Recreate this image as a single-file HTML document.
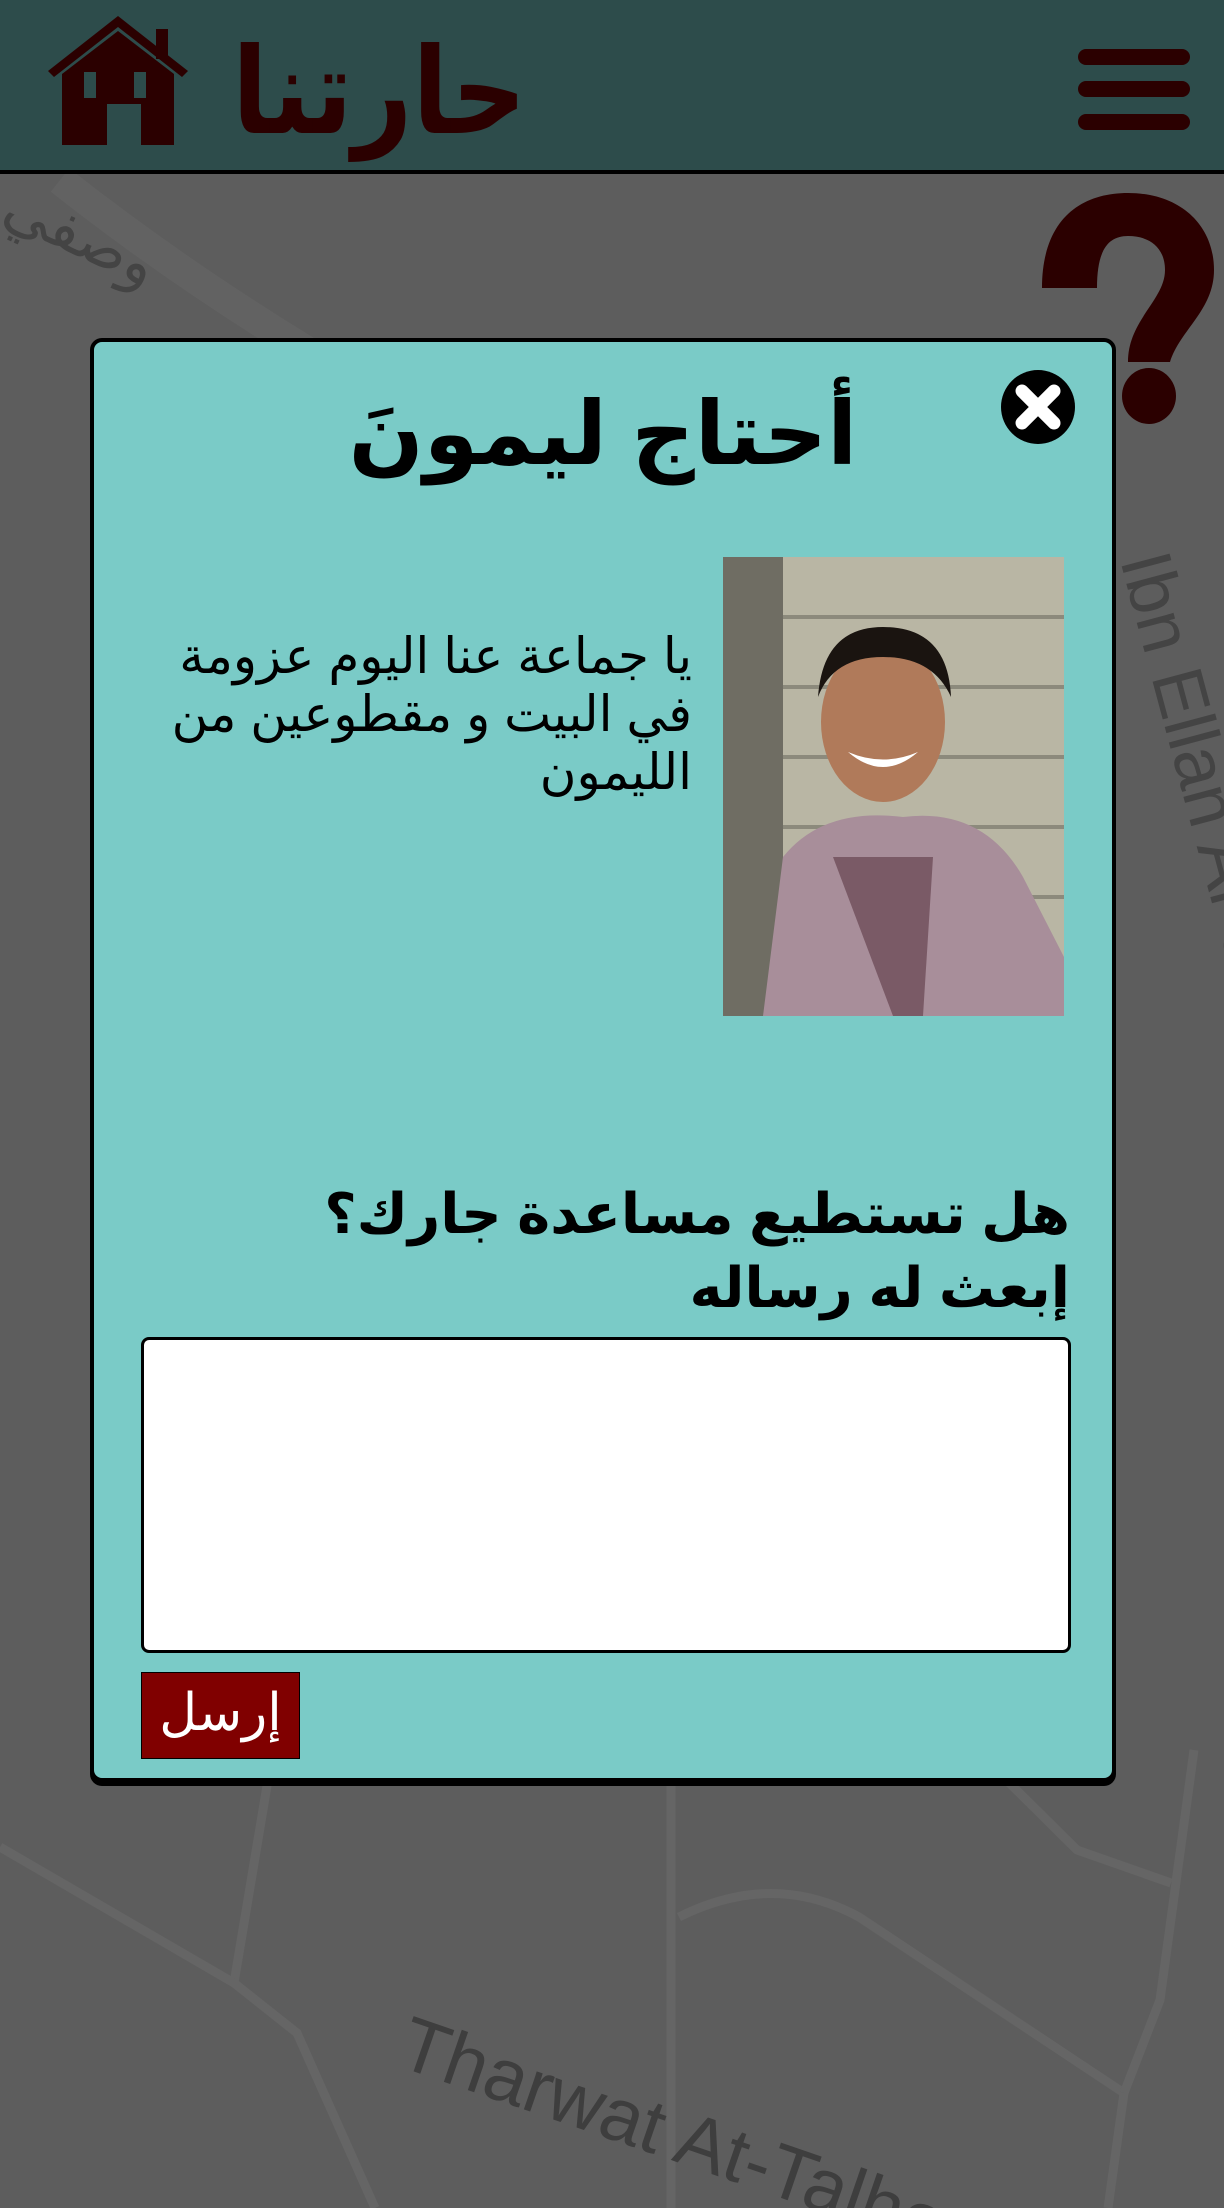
<!DOCTYPE html>
<html><head><meta charset="utf-8"><style>
html,body{margin:0;padding:0}
body{width:1224px;height:2208px;position:relative;overflow:hidden;background:#5d5d5d;font-family:"Liberation Sans","Noto Sans CJK SC","DejaVu Sans",sans-serif}
.hdr{position:absolute;left:0;top:0;width:1224px;height:170px;background:#2d4c4b;border-bottom:4px solid #000}
.logo{position:absolute;left:232px;top:18px;font-size:104px;font-weight:bold;color:#2b0000;line-height:130px;direction:rtl;transform:scaleY(1.15);transform-origin:left top}
.burger div{position:absolute;left:1078px;width:112px;height:16px;border-radius:8px;background:#2b0000}
.modal{position:absolute;left:90px;top:338px;width:1018px;height:1436px;background:#7acbc7;border:4px solid #000;border-radius:12px;box-shadow:0 4px 0 #000}
.ttl{position:absolute;left:0;width:100%;top:40px;text-align:center;font-size:88px;font-weight:bold;color:#000;direction:rtl}
.para{position:absolute;right:420px;top:285px;width:580px;font-size:50px;line-height:58px;text-align:right;direction:rtl;color:#000}
.q{position:absolute;right:42px;top:835px;font-size:56px;line-height:74px;text-align:right;direction:rtl;color:#000;font-weight:bold}
.ta{position:absolute;left:47px;top:995px;width:924px;height:310px;background:#fff;border:3px solid #000;border-radius:8px}
.btn{position:absolute;left:47px;top:1330px;width:157px;height:85px;background:#800000;border:1px solid #000;color:#fff;font-size:52px;text-align:center;line-height:80px;direction:rtl}
</style></head><body>
<svg width="1224" height="2208" style="position:absolute;left:0;top:0" fill="none" stroke="#656565" stroke-width="9">
<path d="M273 1750 L234 1983"/><path d="M0 1847 L234 1983 L297 2033 L375 2208"/>
<path d="M671 1750 L671 2208"/>
<path d="M679 1917 Q773 1870 859 1917 L1124 2093 L1108 2208"/>
<path d="M976 1750 L1077 1850 L1171 1883"/><path d="M1194 1750 L1160 2000 L1124 2093"/>
<path d="M60 180 Q250 330 500 460" stroke-width="30" stroke="#626262"/>
<text x="0" y="220" fill="#444" stroke="none" font-size="60" transform="rotate(25 0 220)">وصفي</text>
<text x="395" y="2065" fill="#3e3e3e" stroke="none" font-size="76" font-family="Liberation Sans" transform="rotate(19 395 2065)">Tharwat At-Talhouni</text>
<text x="1120" y="560" fill="#444" stroke="none" font-size="72" font-family="Liberation Sans" transform="rotate(75 1120 560)">Ibn Ellan Al-S</text>
</svg>
<div class="hdr">
<svg style="position:absolute;left:44px;top:14px" width="150" height="132" viewBox="0 0 150 132">
<path d="M4 57 L74 2 L144 57 L138 63 L74 13 L10 63 Z" fill="#2b0000"/>
<rect x="112" y="15" width="12" height="30" fill="#2b0000"/>
<path d="M18 60 L74 17 L130 60 L130 131 L97 131 L97 90 L63 90 L63 131 L18 131 Z" fill="#2b0000"/>
<rect x="40" y="58" width="12" height="26" fill="#2d4c4b"/><rect x="90" y="58" width="12" height="26" fill="#2d4c4b"/>
</svg>
<div class="logo">حارتنا</div>
<div class="burger"><div style="top:49px"></div><div style="top:81px"></div><div style="top:114px"></div></div>
</div>
<svg style="position:absolute;left:1030px;top:185px" width="194" height="250" viewBox="1030 185 194 250">
<path d="M1042 288 C1042 220 1080 193 1128 193 C1180 193 1214 225 1214 270 C1214 310 1180 330 1170 362 L1128 362 C1128 320 1165 300 1165 270 C1165 248 1150 236 1128 236 C1108 236 1097 250 1097 288 Z" fill="#2b0000"/>
<ellipse cx="1149" cy="396" rx="27" ry="28" fill="#2b0000"/>
</svg>
<div class="modal">
<div class="ttl">أحتاج ليمونَ</div>
<svg style="position:absolute;left:906px;top:27px" width="76" height="76" viewBox="0 0 76 76"><circle cx="38" cy="38" r="37" fill="#000"/><path d="M22 22 L54 54 M54 22 L22 54" stroke="#fff" stroke-width="13" stroke-linecap="round"/></svg>
<svg style="position:absolute;left:629px;top:215px" width="341" height="459" viewBox="0 0 341 459">
<rect width="341" height="459" fill="#b9b6a4"/>
<g stroke="#8c8a7c" stroke-width="4"><path d="M0 60H341M0 130H341M0 200H341M0 270H341M0 340H341M0 410H341"/></g>
<rect x="0" y="0" width="60" height="459" fill="#6f6d63"/>
<path d="M40 459 L60 300 Q100 250 180 260 Q260 250 300 320 L341 400 L341 459Z" fill="#a88e9a"/>
<path d="M110 300 L170 459 L200 459 L210 300Z" fill="#7a5a66"/>
<ellipse cx="160" cy="165" rx="62" ry="80" fill="#b07a5a"/>
<path d="M95 140 Q100 70 160 70 Q225 70 228 140 Q210 100 160 100 Q110 100 95 140Z" fill="#1a1410"/>
<path d="M125 195 Q160 225 195 195 Q160 210 125 195Z" fill="#fff"/>
</svg>
<div class="para">يا جماعة عنا اليوم عزومة في البيت و مقطوعين من الليمون</div>
<div class="q">هل تستطيع مساعدة جارك؟<br>إبعث له رساله</div>
<div class="ta"></div>
<div class="btn">إرسل</div>
</div>
</body></html>
